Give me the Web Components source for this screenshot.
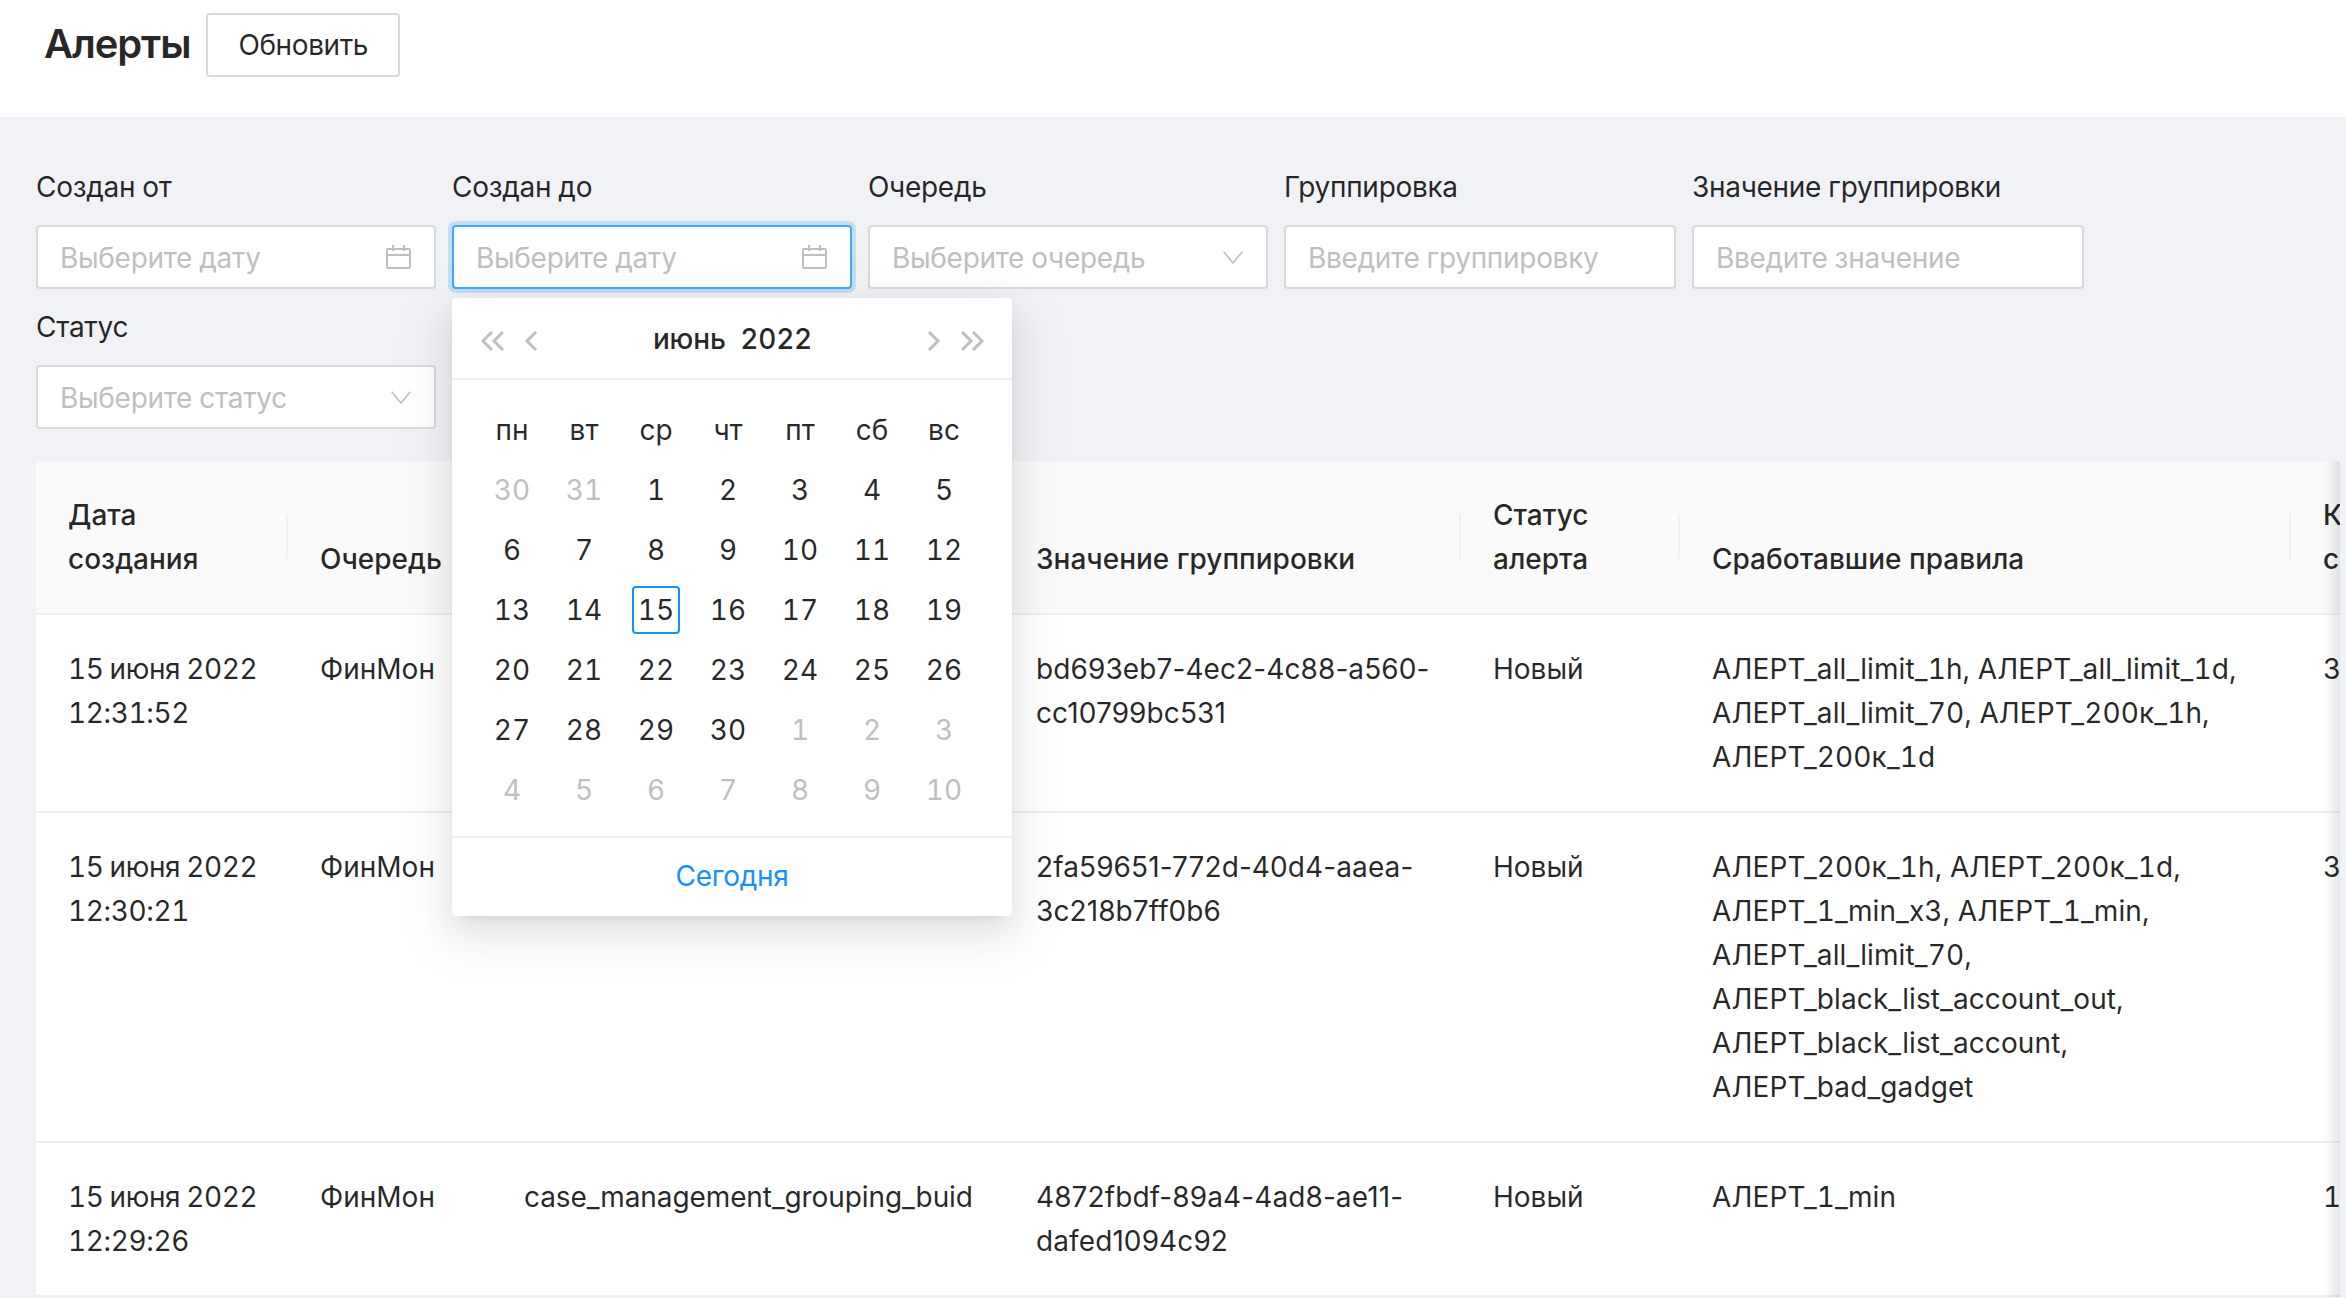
<!DOCTYPE html>
<html lang="ru">
<head>
<meta charset="utf-8">
<title>Алерты</title>
<style>
  html, body { margin: 0; height: 100%; overflow: hidden; }
  body {
    background: #f0f2f5;
    color: rgba(0, 0, 0, .85);
    font: 28px/44px Inter, "Noto Sans", sans-serif;
    font-feature-settings: "tnum";
  }
</style>
</head>
<body>
<alerts-page>
  <page-header slot="header" title="Алерты" action="Обновить"></page-header>
  <filter-bar>
    <filter-field label="Создан от" placeholder="Выберите дату" icon="calendar"></filter-field>
    <filter-field label="Создан до" placeholder="Выберите дату" icon="calendar" focused>
      <date-popup></date-popup>
    </filter-field>
    <filter-field label="Очередь" placeholder="Выберите очередь" icon="down"></filter-field>
    <filter-field label="Группировка" placeholder="Введите группировку" narrow></filter-field>
    <filter-field label="Значение группировки" placeholder="Введите значение" narrow></filter-field>
    <filter-field label="Статус" placeholder="Выберите статус" icon="down"></filter-field>
  </filter-bar>
  <alerts-table></alerts-table>
</alerts-page>

<script>
  const ICONS = {
    calendar: `<svg width="25" height="24" viewBox="0 0 25 24" fill="none" stroke="#bfbfbf" stroke-width="2">
      <rect x="1" y="4" width="23" height="19" rx="1"/>
      <path d="M1 10h23M7 0v6M18 0v6"/></svg>`,
    down: `<svg width="20" height="13" viewBox="0 0 20 13" fill="none" stroke="#bfbfbf" stroke-width="1.6">
      <path d="M.7 .7 10 12 19.3 .7"/></svg>`,
  };

  class AlertsPage extends HTMLElement {
    constructor() {
      super();
      this.attachShadow({ mode: "open" });
      this.shadowRoot.innerHTML = `
        <style>
          :host { display: block; }
          main { padding: 48px 6px 0 36px; }
        </style>
        <slot name="header"></slot>
        <main><slot></slot></main>
      `;
    }
  }
  customElements.define("alerts-page", AlertsPage);

  class PageHeader extends HTMLElement {
    constructor() {
      super();
      this.attachShadow({ mode: "open" });
      this.shadowRoot.innerHTML = `
        <style>
          :host { display: flex; align-items: flex-start; height: 117px; box-sizing: border-box; padding: 13px 0 0 44px; background: #fff; }
          h1 { margin: 0 16px 0 0; font-size: 40px; line-height: 62px; font-weight: 600; letter-spacing: -1.1px; }
          button {
            box-sizing: border-box; height: 64px; padding: 0 30px;
            border: 2px solid #d9d9d9; border-radius: 4px; background: #fff;
            color: inherit; font: inherit; font-feature-settings: inherit; letter-spacing: -.4px;
          }
        </style>
        <h1>${this.getAttribute("title")}</h1>
        <button>${this.getAttribute("action")}</button>
      `;
    }
  }
  customElements.define("page-header", PageHeader);

  class FilterBar extends HTMLElement {
    constructor() {
      super();
      this.attachShadow({ mode: "open" });
      this.shadowRoot.innerHTML = `
        <style>
          :host { display: flex; flex-wrap: wrap; column-gap: 16px; row-gap: 16px; margin-bottom: 32px; }
        </style>
        <slot></slot>
      `;
    }
  }
  customElements.define("filter-bar", FilterBar);

  class FilterField extends HTMLElement {
    constructor() {
      super();
      this.attachShadow({ mode: "open" });
      const icon = ICONS[this.getAttribute("icon")] || "";
      this.shadowRoot.innerHTML = `
        <style>
          :host { display: block; position: relative; width: 400px; }
          :host([narrow]) { width: 392px; }
          :host([focused]) { z-index: 5; }
          label { display: block; padding-bottom: 16px; letter-spacing: -.3px; }
          .box {
            box-sizing: border-box; height: 64px; display: flex; align-items: center; justify-content: space-between;
            padding: 0 23px 0 22px; border: 2px solid #d9d9d9; border-radius: 4px; background: #fff; color: #bfbfbf;
          }
          .box span { letter-spacing: -.3px; padding-top: 2px; }
          :host([focused]) .box { border-color: #40a9ff; box-shadow: 0 0 0 4px rgba(24, 144, 255, .2); }
          svg { display: block; }
        </style>
        <label>${this.getAttribute("label")}</label>
        <div class="box"><span>${this.getAttribute("placeholder")}</span>${icon}</div>
        <slot></slot>
      `;
    }
  }
  customElements.define("filter-field", FilterField);

  class DatePopup extends HTMLElement {
    constructor() {
      super();
      this.attachShadow({ mode: "open" });
      const days = [];
      for (const d of [30, 31]) days.push([d, true]);
      for (let d = 1; d <= 30; d++) days.push([d, false]);
      for (let d = 1; d <= 10; d++) days.push([d, true]);
      const head = ["пн", "вт", "ср", "чт", "пт", "сб", "вс"].map((d) => `<span>${d}</span>`).join("");
      const cells = days.map(([d, muted]) => {
        const cls = muted ? "muted" : d === 15 ? "today" : "";
        return `<span class="${cls}">${d}</span>`;
      }).join("");
      const chev = (w, d) => `<svg width="${w}" height="20" viewBox="0 0 ${w} 20" fill="none" stroke="#bfbfbf" stroke-width="3"><path d="${d}"/></svg>`;
      this.shadowRoot.innerHTML = `
        <style>
          :host {
            position: absolute; left: 0; top: 133px; width: 560px; height: 618px;
            display: flex; flex-direction: column;
            background: #fff; border-radius: 4px;
            box-shadow: 0 6px 12px -8px rgba(0,0,0,.12), 0 12px 32px 0 rgba(0,0,0,.08), 0 18px 56px 16px rgba(0,0,0,.05);
          }
          header {
            box-sizing: border-box; height: 82px; flex: none; padding: 6px 27px 0 28px;
            display: flex; align-items: center; gap: 20px;
            border-bottom: 2px solid #f0f0f0;
          }
          header b { flex: 1; text-align: center; font-weight: 500; white-space: pre; padding-bottom: 5px; letter-spacing: -.2px; }
          header svg { display: block; }
          .grid {
            flex: 1; padding: 19px 32px 0 24px;
            display: grid; grid-template-columns: repeat(7, 72px); grid-template-rows: 61px; grid-auto-rows: 60px;
            align-content: start; justify-items: center; align-items: center;
          }
          .grid span { box-sizing: border-box; width: 48px; height: 48px; line-height: 48px; text-align: center; border-radius: 4px; }
          .grid .muted { color: #bfbfbf; }
          .grid .today { border: 2px solid #1890ff; line-height: 44px; }
          footer {
            flex: none; box-sizing: border-box; height: 80px; letter-spacing: -.3px;
            border-top: 2px solid #f0f0f0; text-align: center; line-height: 76px; color: #1890ff;
          }
        </style>
        <header>
          ${chev(24, "M12 1 3 10l9 9M23 1l-9 9 9 9")}
          ${chev(14, "M12 1 3 10l9 9")}
          <b>июнь  2022</b>
          ${chev(14, "M2 1l9 9-9 9")}
          ${chev(24, "M1 1l9 9-9 9M12 1l9 9-9 9")}
        </header>
        <div class="grid">${head}${cells}</div>
        <footer>Сегодня</footer>
      `;
    }
  }
  customElements.define("date-popup", DatePopup);

  const COLUMNS = [
    ["Дата<br>создания", 252],
    ["Очередь", 204],
    ["", 512],
    ["Значение группировки", 457],
    ["Статус<br>алерта", 219],
    ["Сработавшие правила", 611],
    ["К<br>с", 200],
  ];

  const ROWS = [
    ["15 июня 2022<br>12:31:52", "ФинМон", "", "bd693eb7-4ec2-4c88-a560-<br>cc10799bc531", "Новый",
      "АЛЕРТ_all_limit_1h, АЛЕРТ_all_limit_1d, АЛЕРТ_all_limit_70, АЛЕРТ_200к_1h, АЛЕРТ_200к_1d", "3"],
    ["15 июня 2022<br>12:30:21", "ФинМон", "", "2fa59651-772d-40d4-aaea-<br>3c218b7ff0b6", "Новый",
      "АЛЕРТ_200к_1h, АЛЕРТ_200к_1d, АЛЕРТ_1_min_x3, АЛЕРТ_1_min, АЛЕРТ_all_limit_70, АЛЕРТ_black_list_account_out, АЛЕРТ_black_list_account, АЛЕРТ_bad_gadget", "3"],
    ["15 июня 2022<br>12:29:26", "ФинМон", "case_management_grouping_buid", "4872fbdf-89a4-4ad8-ae11-<br>dafed1094c92", "Новый",
      "АЛЕРТ_1_min", "1"],
  ];

  class AlertsTable extends HTMLElement {
    constructor() {
      super();
      this.attachShadow({ mode: "open" });
      const cols = COLUMNS.map(([, w]) => `<col style="width:${w}px">`).join("");
      const head = COLUMNS.map(([t]) => `<th>${t}</th>`).join("");
      const rows = ROWS.map((r) => `<tr>${r.map((c) => `<td>${c}</td>`).join("")}</tr>`).join("");
      const width = COLUMNS.reduce((s, [, w]) => s + w, 0);
      this.shadowRoot.innerHTML = `
        <style>
          :host { display: block; position: relative; overflow: hidden; background: #fff; }
          :host::after {
            content: ""; position: absolute; top: 0; right: 0; bottom: 0; width: 40px;
            box-shadow: inset -20px 0 16px -16px rgba(0, 0, 0, .15);
          }
          table { table-layout: fixed; border-collapse: separate; border-spacing: 0; width: ${width}px; }
          th, td { padding: 32px; border-bottom: 2px solid #f0f0f0; text-align: left; overflow-wrap: break-word; }
          th { position: relative; background: #fafafa; font-weight: 500; vertical-align: bottom; }
          td { vertical-align: top; }
          /* the hyphens, colons and spaces of this Inter go wide under tnum */
          td:nth-child(1) { white-space: nowrap; letter-spacing: -.37px; word-spacing: -1.2px; }
          td:nth-child(3) { white-space: nowrap; letter-spacing: -.1px; }
          td:nth-child(4) { white-space: nowrap; font-feature-settings: normal; letter-spacing: .1px; }
          td:nth-child(6) { letter-spacing: .1px; }
          th:not(:last-child):not(:nth-child(2)):not(:nth-child(3))::before {
            content: ""; position: absolute; top: 53px; right: 0; width: 2px; height: 45px; background: #f0f0f0;
          }
        </style>
        <table>
          <colgroup>${cols}</colgroup>
          <thead><tr>${head}</tr></thead>
          <tbody>${rows}</tbody>
        </table>
      `;
    }
  }
  customElements.define("alerts-table", AlertsTable);
</script>
</body>
</html>
